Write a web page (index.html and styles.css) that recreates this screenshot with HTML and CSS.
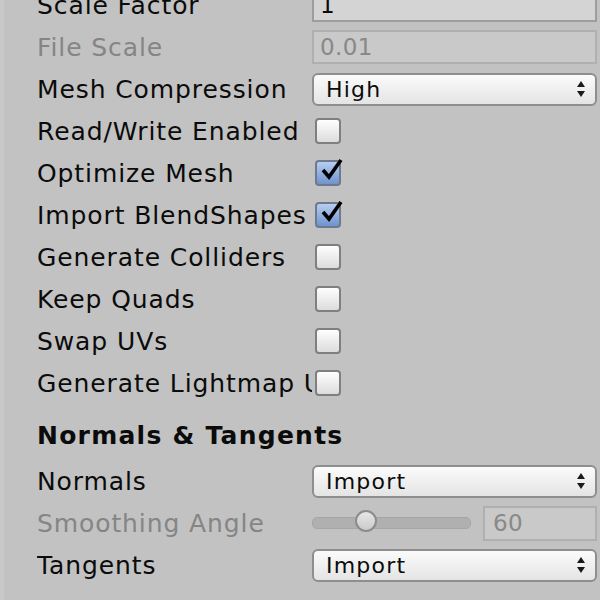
FILE: index.html
```html
<!DOCTYPE html>
<html>
<head>
<meta charset="utf-8">
<link rel="stylesheet" href="styles.css">
</head>
<body>
<div class="panel">
  <div class="row">
    <div class="label">Scale Factor</div>
    <div class="field"><span class="field-text">1</span></div>
  </div>
  <div class="row">
    <div class="label disabled">File Scale</div>
    <div class="field field-disabled"><span class="field-text">0.01</span></div>
  </div>
  <div class="row">
    <div class="label">Mesh Compression</div>
    <div class="dropdown"><span>High</span><span class="arrows"></span></div>
  </div>
  <div class="row">
    <div class="label">Read/Write Enabled</div>
    <div class="check"></div>
  </div>
  <div class="row">
    <div class="label">Optimize Mesh</div>
    <div class="check checked"><svg viewBox="0 0 26 26" width="26" height="26"><path d="M5 13 L11 20 L23 3" fill="none" stroke="#000" stroke-width="3.6" stroke-linecap="butt" stroke-linejoin="miter"/></svg></div>
  </div>
  <div class="row">
    <div class="label">Import BlendShapes</div>
    <div class="check checked"><svg viewBox="0 0 26 26" width="26" height="26"><path d="M5 13 L11 20 L23 3" fill="none" stroke="#000" stroke-width="3.6" stroke-linecap="butt" stroke-linejoin="miter"/></svg></div>
  </div>
  <div class="row">
    <div class="label">Generate Colliders</div>
    <div class="check"></div>
  </div>
  <div class="row">
    <div class="label">Keep Quads</div>
    <div class="check"></div>
  </div>
  <div class="row">
    <div class="label">Swap UVs</div>
    <div class="check"></div>
  </div>
  <div class="row">
    <div class="label">Generate Lightmap UVs</div>
    <div class="check"></div>
  </div>
  <div class="heading">Normals &amp; Tangents</div>
  <div class="row">
    <div class="label">Normals</div>
    <div class="dropdown"><span>Import</span><span class="arrows"></span></div>
  </div>
  <div class="row">
    <div class="label disabled">Smoothing Angle</div>
    <div class="slider">
      <div class="track"><div class="thumb"></div></div>
      <div class="field field-disabled value"><span class="field-text">60</span></div>
    </div>
  </div>
  <div class="row">
    <div class="label">Tangents</div>
    <div class="dropdown"><span>Import</span><span class="arrows"></span></div>
  </div>
</div>
</body>
</html>
```
FILE: styles.css
```css
html, body {
  margin: 0;
  padding: 0;
  width: 600px;
  height: 600px;
  overflow: hidden;
  background: #c2c2c2;
}
body {
  font-family: "DejaVu Sans", Verdana, sans-serif;
  font-size: 25px;
  color: #0b0b0b;
  border-left: 4px solid #c9c9c9;
  box-sizing: border-box;
}
.panel {
  margin-top: -16px;
  padding-left: 33px;
  padding-right: 3px;
}
.row {
  height: 42px;
  display: flex;
  align-items: center;
}
.label {
  width: 275px;
  flex: none;
  white-space: nowrap;
  overflow: hidden;
  letter-spacing: 0.9px;
}
.disabled {
  color: #858585;
}
.field {
  flex: 1;
  height: 34px;
  box-sizing: border-box;
  border: 2px solid #9d9d9d;
  background: #d4d4d4;
  display: flex;
  align-items: center;
  padding-left: 6px;
  font-size: 23px;
}
.field-disabled {
  background: #c9c9c9;
  border-color: #b0b0b0;
  color: #888888;
}
.field-text {
  letter-spacing: 0.4px;
}
.dropdown {
  flex: 1;
  height: 33px;
  box-sizing: border-box;
  border: 2px solid #8e8e8e;
  border-radius: 6px;
  background: linear-gradient(#fbfbfb, #e4e4e4);
  display: flex;
  align-items: center;
  justify-content: space-between;
  padding: 0 10px 0 12px;
  font-size: 22px;
  letter-spacing: 1.2px;
}
.arrows {
  width: 8px;
  height: 16px;
  position: relative;
}
.arrows::before, .arrows::after {
  content: "";
  position: absolute;
  left: 0;
  border-left: 4px solid transparent;
  border-right: 4px solid transparent;
}
.arrows::before {
  top: 0;
  border-bottom: 6px solid #1a1a1a;
}
.arrows::after {
  bottom: 0;
  border-top: 6px solid #1a1a1a;
}
.check {
  width: 26px;
  height: 26px;
  margin-left: 3px;
  box-sizing: border-box;
  border: 2px solid #7f7f7f;
  border-radius: 4px;
  background: linear-gradient(#fefefe, #dcdcdc);
  position: relative;
}
.check.checked {
  background: linear-gradient(#b7cdf0, #6f93cf);
  border-color: #6e7a8c;
}
.check svg {
  position: absolute;
  left: 1px;
  top: -5px;
  overflow: visible;
}
.heading {
  height: 56px;
  box-sizing: border-box;
  padding-top: 6px;
  display: flex;
  align-items: center;
  font-weight: bold;
  letter-spacing: 1.25px;
}
.slider {
  flex: 1;
  display: flex;
  align-items: center;
  gap: 12px;
}
.track {
  width: 157px;
  height: 10px;
  border-radius: 5px;
  background: #b0b0b0;
  border: 1px solid #a6a6a6;
  position: relative;
  flex: none;
}
.thumb {
  position: absolute;
  left: 42px;
  top: -8px;
  width: 22px;
  height: 22px;
  border-radius: 50%;
  box-sizing: border-box;
  border: 2px solid #8c8c8c;
  background: linear-gradient(#e6e6e6, #cbcbcb);
}
.value {
  flex: 1;
  height: 35px;
  padding-left: 8px;
}
```
